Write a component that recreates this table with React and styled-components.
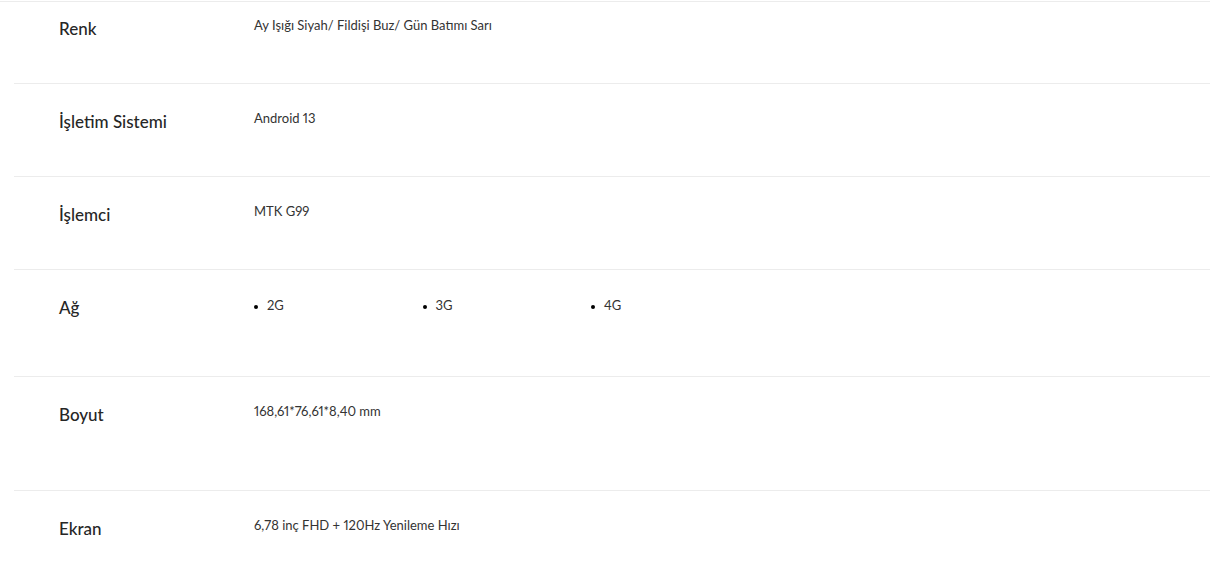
import React from 'react'
import styled, { createGlobalStyle } from 'styled-components'

const GlobalStyle = createGlobalStyle`
  html, body {
    margin: 0;
    padding: 0;
    background: #fff;
  }
  body {
    font-family: Lato, "Noto Sans", "Liberation Sans", sans-serif;
    color: #333;
  }
`

const Page = styled.div`
  padding-top: 1px;
  overflow: hidden;
  height: 574px;
`

const TopRule = styled.div`
  height: 1px;
  background: #ececec;
`

const SpecList = styled.div`
  margin-left: 14px;
`

const Row = styled.div`
  display: grid;
  grid-template-columns: 240px 1fr;
  box-sizing: border-box;
  height: ${p => p.$h}px;
  padding-top: ${p => p.$top}px;
  border-bottom: 1px solid #ececec;
`

const Label = styled.div`
  padding-left: 45px;
  margin-top: 2px;
  font-size: 17px;
  line-height: 20px;
  font-weight: 500;
  color: #262626;
`

const Value = styled.div`
  font-size: 13px;
  line-height: 16px;
  color: #333;
  font-variant-numeric: proportional-nums;
`

const BulletList = styled.ul`
  list-style: none;
  margin: 1px 0 0;
  padding: 0;
  display: grid;
  grid-template-columns: repeat(3, 168.5px);
`

const Bullet = styled.li`
  display: flex;
  align-items: center;
  gap: 9px;

  &::before {
    content: '';
    width: 4px;
    height: 4px;
    margin-top: 3px;
    border-radius: 50%;
    background: #000;
  }
`

const specs = [
  { label: 'Renk', value: 'Ay Işığı Siyah/ Fildişi Buz/ Gün Batımı Sarı', h: 82, top: 15 },
  { label: 'İşletim Sistemi', value: 'Android 13', h: 93, top: 26 },
  { label: 'İşlemci', value: 'MTK G99', h: 93, top: 26 },
  { label: 'Ağ', list: ['2G', '3G', '4G'], h: 107, top: 26 },
  { label: 'Boyut', value: '168,61*76,61*8,40 mm', h: 114, top: 26 },
  { label: 'Ekran', value: '6,78 inç FHD + 120Hz Yenileme Hızı', h: 114, top: 26 },
]

export default function App() {
  return (
    <Page>
      <GlobalStyle />
      <TopRule />
      <SpecList>
        {specs.map(s => (
          <Row key={s.label} $h={s.h} $top={s.top}>
            <Label>{s.label}</Label>
            <Value>
              {s.list ? (
                <BulletList>
                  {s.list.map(item => <Bullet key={item}>{item}</Bullet>)}
                </BulletList>
              ) : s.value}
            </Value>
          </Row>
        ))}
      </SpecList>
    </Page>
  )
}
